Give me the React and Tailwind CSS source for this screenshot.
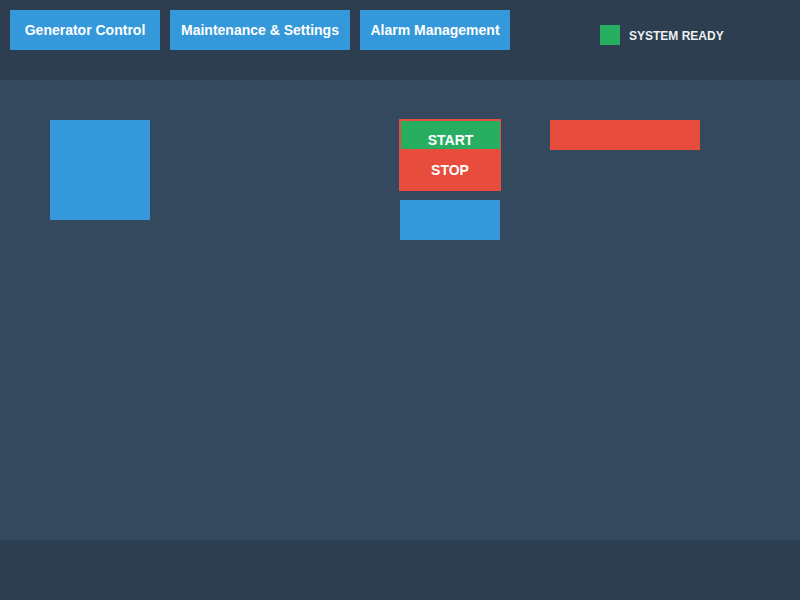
const tabs = [
  { label: "Generator Control", w: "w-[150px]" },
  { label: "Maintenance & Settings", w: "w-[180px]" },
  { label: "Alarm Management", w: "w-[150px]" },
];

const Header = () => (
  <header className="flex h-20 items-start bg-[#2c3e50] p-2.5">
    <nav className="flex gap-2.5">
      {tabs.map((t) => (
        <button
          key={t.label}
          className={`${t.w} h-10 bg-[#3498db] text-[14px] font-bold text-white`}
        >
          {t.label}
        </button>
      ))}
    </nav>
    <div className="ml-[90px] mt-[15px] flex h-5 items-center gap-[9px]">
      <span className="h-5 w-5 bg-[#27ae60]" />
      <span className="pt-[2px] text-[12px] font-bold text-[#ecf0f1]">SYSTEM READY</span>
    </div>
  </header>
);

const ControlStack = () => (
  <div className="ml-[249px] -mt-px flex flex-col">
    <div className="flex h-[72px] w-[102px] flex-col bg-[#e74c3c] pl-[2px] pt-[2px]">
      <button className="flex h-[28px] w-[99px] items-start justify-center bg-[#27ae60] pt-[9px] text-[14px] leading-5 font-bold text-white">
        START
      </button>
      <button className="flex flex-1 items-center justify-center pr-[2px] pt-[1px] text-[14px] font-bold text-white">
        STOP
      </button>
    </div>
    <div className="ml-px mt-[9px] h-10 w-[100px] bg-[#3498db]" />
  </div>
);

export default function App() {
  return (
    <div className="flex h-[600px] w-[800px] flex-col font-['Liberation_Sans',Arial,sans-serif]">
      <Header />
      <main className="flex h-[460px] items-start bg-[#34495e] px-[50px] pt-10">
        <div className="h-[100px] w-[100px] bg-[#3498db]" />
        <ControlStack />
        <div className="ml-[49px] h-[30px] w-[150px] bg-[#e74c3c]" />
      </main>
      <footer className="h-[60px] bg-[#2c3e50]" />
    </div>
  );
}
